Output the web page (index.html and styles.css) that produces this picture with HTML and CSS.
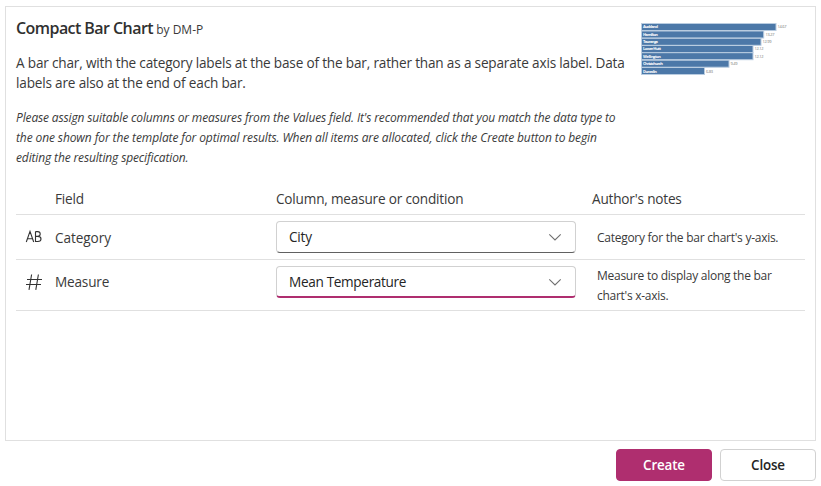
FILE: index.html
```html
<!DOCTYPE html>
<html lang="en">
<head>
<meta charset="utf-8">
<title>Compact Bar Chart</title>
<link rel="stylesheet" href="styles.css">
</head>
<body>
<main class="panel">
  <header class="intro">
    <div class="copy">
      <h1><span class="name">Compact Bar Chart</span> <span class="author">by DM-P</span></h1>
      <p class="description">A bar char, with the category labels at the base of the bar, rather than as a separate axis label. Data<br>labels are also at the end of each bar.</p>
      <p class="hint">Please assign suitable columns or measures from the Values field. It's recommended that you match the data type to<br><span class="hint-second">the one shown for the template for optimal results. When all items are allocated, click the Create button to begin</span><br>editing the resulting specification.</p>
    </div>
    <svg class="preview" width="160" height="56" viewBox="0 0 160 56">
      <g fill="#4c78a8" stroke="#b9cce0" stroke-width="1">
        <rect x=".5" y="2.5" width="134.5" height="7"/>
        <rect x=".5" y="10" width="122.2" height="7"/>
        <rect x=".5" y="17.3" width="119.5" height="7"/>
        <rect x=".5" y="24.5" width="111.5" height="7"/>
        <rect x=".5" y="31.7" width="111.5" height="7"/>
        <rect x=".5" y="39.2" width="87.5" height="7"/>
        <rect x=".5" y="46.5" width="63" height="7"/>
      </g>
      <g class="bar-name">
        <text x="2" y="7.4" textLength="15">Auckland</text>
        <text x="2" y="15.2" textLength="15">Hamilton</text>
        <text x="2" y="22.4" textLength="15">Tauranga</text>
        <text x="2" y="29.4" textLength="18">Lower Hutt</text>
        <text x="2" y="36.8" textLength="18">Wellington</text>
        <text x="2" y="44.4" textLength="20">Christchurch</text>
        <text x="2" y="51.6" textLength="14">Dunedin</text>
      </g>
      <g class="bar-value">
        <text x="136.5" y="7.4" textLength="9">14.67</text>
        <text x="124.5" y="15.2" textLength="9">13.27</text>
        <text x="121.5" y="22.4" textLength="9">12.99</text>
        <text x="113.5" y="29.4" textLength="9">12.12</text>
        <text x="113.5" y="36.8" textLength="9">12.12</text>
        <text x="89.5" y="44.4" textLength="7">9.49</text>
        <text x="65" y="51.6" textLength="7">6.83</text>
      </g>
    </svg>
  </header>
  <section class="table">
    <div class="row head">
      <span></span><span class="c1">Field</span><span class="c2">Column, measure or condition</span><span class="c3">Author's notes</span>
    </div>
    <div class="row first">
      <svg class="icon" width="18" height="18" viewBox="0 0 18 18"><path d="M1.3 14 5 3.4 8.7 14M2.5 10.7H7.6M10.5 3.6V13.5H12.8Q16 13.5 16 11 16 8.4 12.8 8.4H10.5M12.8 8.4Q15.2 8.2 15.2 6 15.2 3.6 12.8 3.6H10.5"/></svg>
      <span class="c1">Category</span>
      <div class="select"><span class="city">City</span><svg width="14" height="9" viewBox="0 0 14 9"><path d="M1.3 1.3 7 7 12.7 1.3"/></svg></div>
      <p class="note">Category for the bar chart's y-axis.</p>
    </div>
    <div class="row second">
      <svg class="icon" width="18" height="18" viewBox="0 0 18 18"><path d="M6.6 1.5 4 16.8M13.4 1.5 10.8 16.8M2 6.5H17M1 11.5H16"/></svg>
      <span class="c1">Measure</span>
      <div class="select active"><span class="mean">Mean Temperature</span><svg width="14" height="9" viewBox="0 0 14 9"><path d="M1.3 1.3 7 7 12.7 1.3"/></svg></div>
      <p class="note">Measure to display along the bar<br>chart's x-axis.</p>
    </div>
  </section>
</main>
<footer class="actions">
  <button class="primary">Create</button>
  <button>Close</button>
</footer>
</body>
</html>
```

FILE: styles.css
```css
* { box-sizing: border-box; }
body {
  margin: 0;
  padding: 6px 5px 5px;
  background: #fff;
  color: #3a3a3a;
  font: 13.6px/20px "Open Sans", "Noto Sans", sans-serif;
  letter-spacing: -.19px;
  white-space: nowrap;
}
p, h1 { margin: 0; font-weight: 400; }
.panel {
  width: 811px;
  height: 435px;
  padding: 12px 10px 0;
  border: 1px solid #e0e0e0;
}
.intro { display: flex; height: 161px; }
.copy { width: 625px; }
h1 { height: 20px; font-size: 12px; line-height: 20px; letter-spacing: 0; }
.name { font-size: 16px; line-height: 18px; font-weight: 600; letter-spacing: -.56px; color: #303030; }
.description { margin-top: 14px; letter-spacing: -.18px; }
.hint { margin-top: 15px; font-size: 12px; font-style: italic; letter-spacing: -.14px; }
.hint-second { letter-spacing: -.11px; }
.preview { margin-top: 2px; overflow: visible; font-family: "Open Sans", sans-serif; font-size: 4px; letter-spacing: 0; }
.bar-name { fill: #fff; font-weight: 700; }
.bar-value { fill: #777; }
.table { width: 789px; }
.row {
  display: grid;
  grid-template-columns: 39px 221px 300px 1fr;
  align-items: center;
  border-bottom: 1px solid #e0e0e0;
}
.head { height: 35px; padding-top: 4px; }
.first { height: 45px; }
.first .c1 { padding-top: 1px; letter-spacing: -.08px; }
.second { height: 51px; align-items: start; padding-top: 6px; }
.second .icon { margin-top: 7px; }
.second .c1 { margin-top: 6px; }
.icon { margin-left: 9px; fill: none; stroke: #333; stroke-width: 1.1; }
.c3 { padding-left: 16px; }
.select {
  display: flex;
  align-items: center;
  justify-content: space-between;
  height: 32px;
  padding: 0 13px 0 12px;
  border: 1px solid #d1d1d1;
  border-bottom-color: #616161;
  border-radius: 4px;
  color: #242424;
}
.select svg { fill: none; stroke: #707070; stroke-width: 1.1; }
.select.active { border-bottom: 2px solid #af2e6f; }
.select.active svg { margin-top: 1px; }
.mean { padding-top: 1px; letter-spacing: -.33px; }
.note { padding: 1px 0 0 21px; font-size: 12px; letter-spacing: -.27px; }
.second .note { margin-top: -1px; }
.actions { display: flex; justify-content: flex-end; gap: 8px; padding-top: 8px; }
button {
  width: 96px;
  height: 32px;
  padding: 0;
  border: 1px solid #d1d1d1;
  border-radius: 4px;
  background: #fff;
  color: #242424;
  font: 600 13.4px/20px "Open Sans", sans-serif;
  letter-spacing: -.15px;
}
.primary { border-color: #af2e6f; background: #af2e6f; color: #fff; }
```
